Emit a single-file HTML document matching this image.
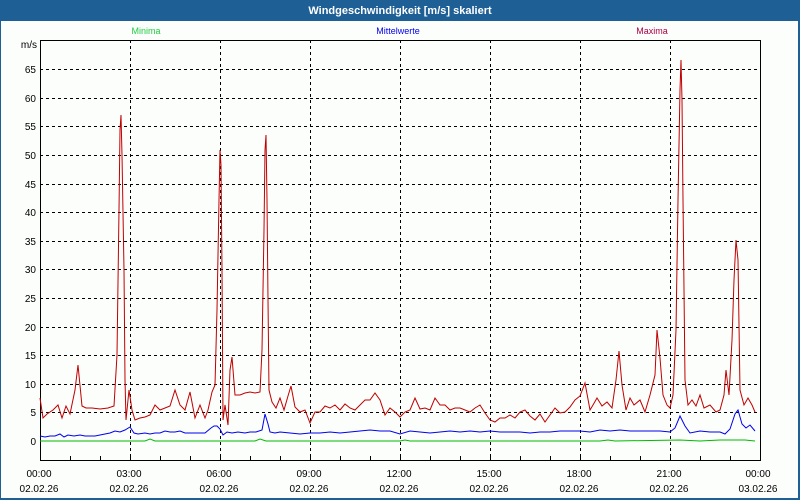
<!DOCTYPE html>
<html><head><meta charset="utf-8"><style>
html,body{margin:0;padding:0;width:800px;height:500px;overflow:hidden;background:#fff;font-family:"Liberation Sans",sans-serif}
</style></head><body>
<svg width="800" height="500" xmlns="http://www.w3.org/2000/svg" style="display:block">
<rect x="0" y="0" width="800" height="500" fill="#1e5f96"/>
<rect x="1" y="21" width="797" height="477" fill="#fcfefc"/>
<text x="400" y="14" fill="#fff" font-size="11" font-weight="bold" text-anchor="middle">Windgeschwindigkeit [m/s] skaliert</text>
<g font-size="9" text-anchor="middle">
<text x="146" y="34" fill="#22cc44">Minima</text>
<text x="398" y="34" fill="#0000ee">Mittelwerte</text>
<text x="652" y="34" fill="#aa0044">Maxima</text>
</g>
<g stroke="#000" stroke-dasharray="3,3" stroke-width="1">
<path d="M40 69.5H760M40 98.5H760M40 126.5H760M40 155.5H760M40 184.5H760M40 212.5H760M40 241.5H760M40 269.5H760M40 298.5H760M40 327.5H760M40 355.5H760M40 384.5H760M40 412.5H760"/>
<path d="M130.5 40V460M220.5 40V460M310.5 40V460M400.5 40V460M490.5 40V460M580.5 40V460M670.5 40V460"/>
</g>
<path d="M40.5 40V460.5H760.5V40M40 40.5H760" stroke="#000" fill="none"/>
<path d="M70.5 456V460M100.5 456V460M130.5 456V460M160.5 456V460M190.5 456V460M220.5 456V460M250.5 456V460M280.5 456V460M310.5 456V460M340.5 456V460M370.5 456V460M400.5 456V460M430.5 456V460M460.5 456V460M490.5 456V460M520.5 456V460M550.5 456V460M580.5 456V460M610.5 456V460M640.5 456V460M670.5 456V460M700.5 456V460M730.5 456V460" stroke="#000"/>
<g font-size="10" fill="#000" text-anchor="end">
<text x="37" y="48">m/s</text>
<text x="36" y="73">65</text><text x="36" y="102">60</text><text x="36" y="130">55</text><text x="36" y="159">50</text><text x="36" y="188">45</text><text x="36" y="216">40</text><text x="36" y="245">35</text><text x="36" y="273">30</text><text x="36" y="302">25</text><text x="36" y="331">20</text><text x="36" y="359">15</text><text x="36" y="388">10</text><text x="36" y="416">5</text><text x="36" y="445">0</text>
</g>
<g font-size="10" fill="#000" text-anchor="middle">
<text x="39" y="477">00:00</text><text x="39" y="492">02.02.26</text>
<text x="129" y="477">03:00</text><text x="129" y="492">02.02.26</text>
<text x="219" y="477">06:00</text><text x="219" y="492">02.02.26</text>
<text x="309" y="477">09:00</text><text x="309" y="492">02.02.26</text>
<text x="399" y="477">12:00</text><text x="399" y="492">02.02.26</text>
<text x="489" y="477">15:00</text><text x="489" y="492">02.02.26</text>
<text x="579" y="477">18:00</text><text x="579" y="492">02.02.26</text>
<text x="669" y="477">21:00</text><text x="669" y="492">02.02.26</text>
<text x="758" y="477">00:00</text><text x="758" y="492">03.02.26</text>
</g>
<polyline fill="none" stroke="#00bb00" stroke-width="1" points="40,441 145,441 150,439 155,441 255,441 260,439 266,441 400,441 405,440 410,441 600,441 608,440 615,441 680,440 700,441 720,440 745,440 755,441"/>
<polyline fill="none" stroke="#0000ee" stroke-width="1" points="40,436 45,437 50,436 55,436 60,434 64,437 68,435 74,436 80,435 85,436 95,436 100,435 110,433 115,431 120,432 125,430 130,427 134,433 138,434 145,433 150,434 155,433 160,433 165,431 170,432 175,432 180,431 185,433 195,433 205,433 211,428 214,426 217,426 220,429 223,435 227,432 232,433 238,432 245,433 250,432 256,432 262,430 265,414 268,424 270,432 275,433 280,432 290,433 300,434 310,433 320,433 330,432 340,433 350,432 360,431 370,430 380,431 390,431 400,434 410,431 420,432 430,433 440,432 450,431 460,432 470,431 480,432 490,431 500,432 510,432 520,432 530,433 540,432 550,432 560,431 570,431 580,431 590,432 600,430 610,431 620,430 630,431 640,431 650,431 660,431 670,432 675,428 680,416 685,426 690,433 700,431 710,432 720,432 725,434 730,429 735,414 738,410 742,424 746,428 750,425 755,431"/>
<polyline fill="none" stroke="#c00000" stroke-width="1" points="40,398 43,418 47,414 53,410 58,405 62,418 66,406 70,414 75,390 78,365 82,406 86,408 92,408 100,409 108,408 114,406 117,355 119,210 120,130 121,115 122,155 124,270 125,380 126,420 129,390 132,410 135,420 140,418 145,417 150,415 155,405 160,410 165,408 170,406 175,390 180,405 185,410 190,392 195,418 200,405 205,418 208,410 212,392 215,385 217,310 219,200 220,150 221,165 222,270 223,420 225,405 228,425 230,370 232,357 235,395 240,395 245,393 250,392 255,393 260,392 262,350 264,230 265,150 266,135 267,200 268,300 269,390 272,402 276,408 280,398 284,410 288,396 291,386 295,407 300,412 305,410 310,423 315,412 320,412 325,406 330,408 335,405 340,410 345,404 350,408 355,410 360,405 365,400 370,400 375,393 380,400 385,415 390,408 395,412 400,417 405,412 410,410 415,398 420,409 425,408 430,410 435,398 440,405 445,405 450,410 455,408 460,408 465,410 470,412 475,408 480,405 485,413 490,420 495,422 500,418 505,418 510,415 515,418 520,412 525,410 530,416 535,420 540,414 545,422 550,415 555,408 560,413 565,412 570,407 575,400 580,396 585,383 590,410 593,405 597,398 602,406 607,402 612,408 616,380 619,351 622,385 626,410 630,398 634,405 640,400 645,412 650,395 655,375 657,330 660,358 663,395 667,405 670,408 673,395 676,330 678,200 680,90 681,60 682,100 683,200 685,380 688,405 692,400 696,406 700,395 704,408 710,405 716,412 720,410 724,395 726,370 729,395 732,340 734,280 736,240 738,260 740,390 744,405 748,398 752,405 755,412"/>
</svg>
</body></html>
